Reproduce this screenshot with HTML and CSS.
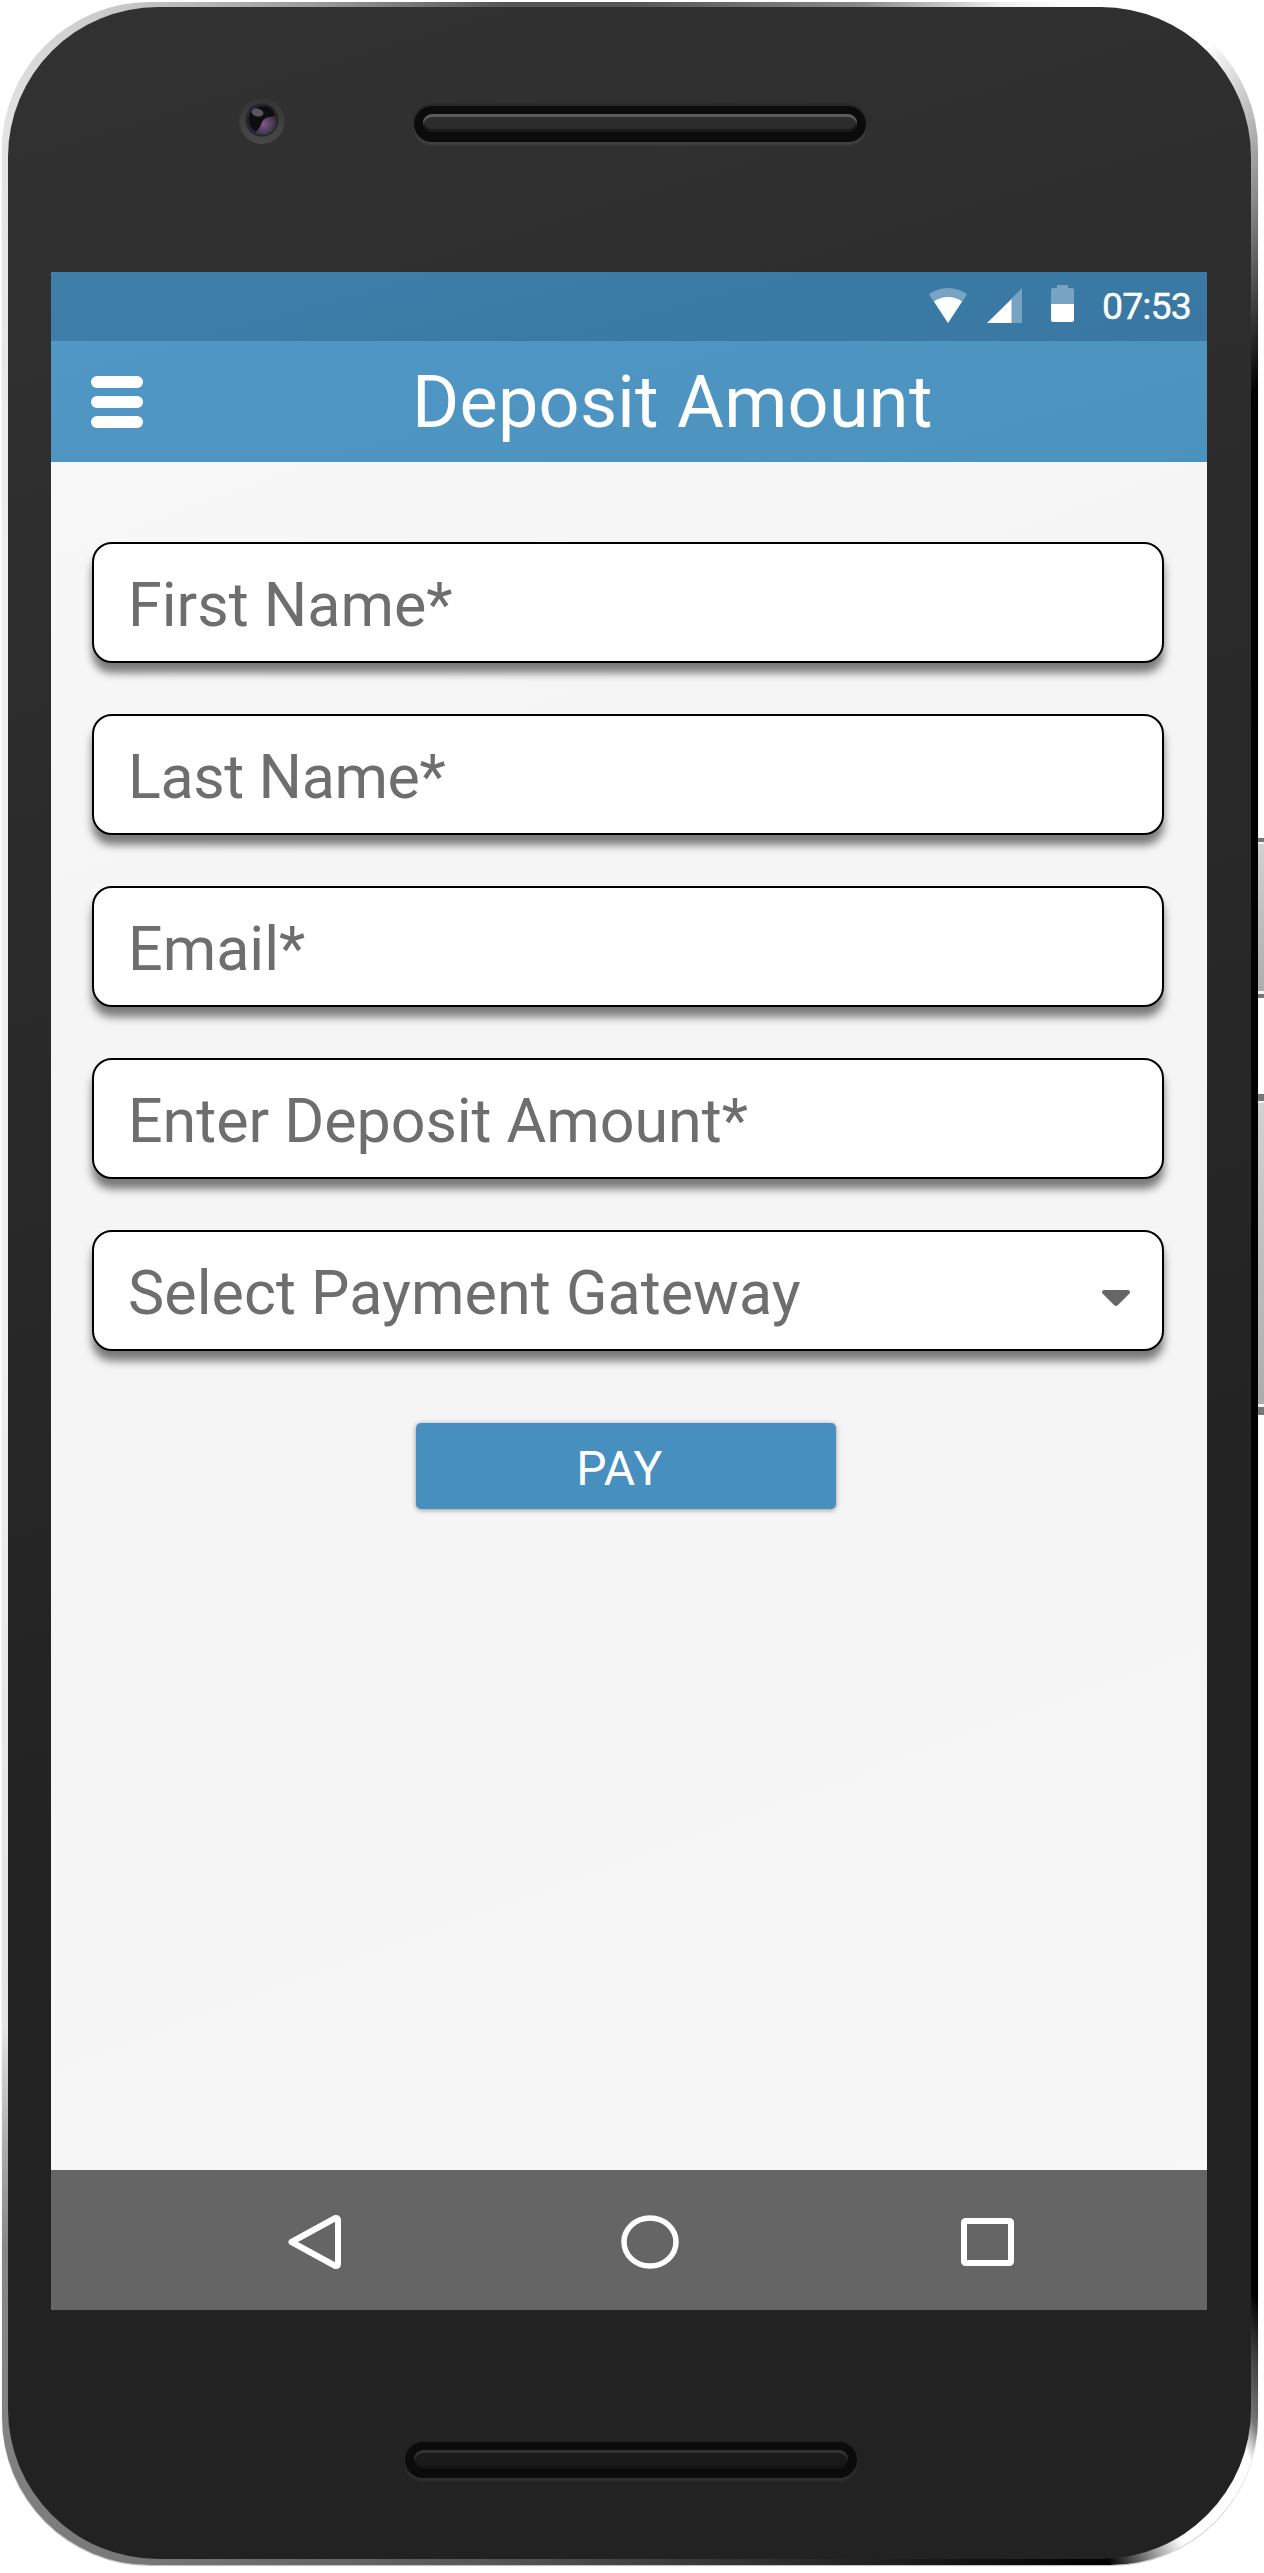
FILE: index.html
```html
<!DOCTYPE html>
<html lang="en">
<head>
<meta charset="utf-8">
<title>Deposit Amount</title>
<link rel="stylesheet" href="styles.css">
</head>
<body>
<div class="phone">
  <span class="side-button power"></span>
  <span class="side-button volume"></span>
  <div class="face">
    <div class="bezel-top">
      <svg class="camera" width="46" height="48" viewBox="0 0 46 48">
        <defs>
          <radialGradient id="lens" cx=".55" cy=".6" r=".55"><stop offset="0" stop-color="#7c5689"/><stop offset=".5" stop-color="#52405e"/><stop offset="1" stop-color="#25222b"/></radialGradient>
          <linearGradient id="halo" x1="0" y1="0" x2="0" y2="1"><stop offset="0" stop-color="#333"/><stop offset=".6" stop-color="#414141"/><stop offset="1" stop-color="#484848"/></linearGradient>
        </defs>
        <ellipse cx="23" cy="24" rx="22.500" ry="23" fill="url(#halo)"/>
        <circle cx="23" cy="23" r="16.500" fill="#25252c"/>
        <circle cx="23.500" cy="24" r="14" fill="url(#lens)"/>
        <path d="M13 32C8 25 9 14 17 11s17-3 19 8l-6 1c-5 1-8 5-9 10l-4 5z" fill="#0e0d10"/>
        <ellipse cx="18.500" cy="15.500" rx="6" ry="4" fill="#5b5460" transform="rotate(15 18.500 15.500)"/>
      </svg>
      <div class="grille"><span></span></div>
    </div>
    <main class="screen">
      <div class="status-bar">
        <svg class="wifi" width="38" height="35" viewBox="0 0 38 35">
          <path d="M0 6.500Q8 0 19 0t19 6.500L19 35z" fill="#78a3c2"/>
          <path d="M5 13.500Q11 9 19 9t14 4.500L19 35z" fill="#fff"/>
        </svg>
        <svg class="signal" width="35" height="35" viewBox="0 0 35 35">
          <path d="M35 0v35H24V11z" fill="#78a3c2"/><path d="M0 35 24.500 11v24z" fill="#fff"/>
        </svg>
        <svg class="battery" width="23" height="37" viewBox="0 0 23 37">
          <path d="M6 0h11v3h4q2 0 2 2v14H0V5q0-2 2-2h4z" fill="#78a3c2"/><path d="M0 19h23v16q0 2-2 2H2q-2 0-2-2z" fill="#fff"/>
        </svg>
        <span class="clock">07:53</span>
      </div>
      <header class="app-bar">
        <div class="menu"><span></span><span></span><span></span></div>
        <h1 class="title">Deposit Amount</h1>
      </header>
      <form class="form">
        <div class="field"><span class="label first">First Name*</span></div>
        <div class="field"><span class="label last">Last Name*</span></div>
        <div class="field"><span class="label email">Email*</span></div>
        <div class="field"><span class="label amount">Enter Deposit Amount*</span></div>
        <div class="field"><span class="label gateway">Select Payment Gateway</span>
          <svg width="28" height="16" viewBox="0 0 28 16"><path d="M2 0h24q3 1 1.500 3.500L16 15q-2 2-4 0L.5 3.500Q-1 1 2 0z" fill="#666"/></svg>
        </div>
        <button class="pay" type="button">PAY</button>
      </form>
      <nav class="nav-bar">
        <svg class="back" width="53" height="56" viewBox="0 0 53 56"><path d="M47.500 4 3.500 28l44 24q2.500 0 2.500-2.500v-43Q50 4 47.500 4z" fill="none" stroke="#fff" stroke-width="6" stroke-linejoin="round"/></svg>
        <svg class="home" width="58" height="54" viewBox="0 0 58 54"><ellipse cx="29" cy="27" rx="26" ry="24" fill="none" stroke="#fff" stroke-width="5.500"/></svg>
        <svg class="recent" width="53" height="48" viewBox="0 0 53 48"><rect x="3" y="3" width="47" height="42" rx="1.500" fill="none" stroke="#fff" stroke-width="6"/></svg>
      </nav>
    </main>
    <div class="bezel-bottom"><div class="grille dim"><span></span></div></div>
  </div>
</div>
</body>
</html>
```
FILE: styles.css
```css
* { box-sizing: border-box; }
html { background: #fff; }
body { margin: 0; width: 1264px; height: 2573px; overflow: hidden; font-family: Roboto, sans-serif; }

.phone {
  position: relative;
  width: 1256px;
  height: 2563px;
  margin: 2px 0 0 2px;
  padding: 5px 7px 6px 6px;
  border-radius: 148px;
  background: conic-gradient(#555 0deg, #888 10.2deg, #eee 16.2deg, #fff 19deg, #fff 25deg, #bbb 28deg, #888 30deg, #333 33deg, #000 35deg, #000 148.3deg, #333 149.5deg, #777 151.3deg, #fff 152.2deg, #fff 156.300deg, #777 158deg, #000 159.500deg, #222 169.700deg, #555 185.700deg, #777 201deg, #888 213deg, #aaa 215.700deg, #e4e4e4 220deg, #f0f0f0 270deg, #eee 320deg, #e2e2e2 331.700deg, #c4c4c4 339deg, #999 346.400deg, #555 354.300deg, #555 360deg);
  box-shadow: 0 1px 1px #bbb;
}
.side-button {
  position: absolute;
  left: 1256px;
  width: 6px;
  background: linear-gradient(#d2d2d2, #acacac);
  border-style: solid;
  border-color: #777;
  border-width: 4px 0;
  box-shadow: inset 0 2px #f4f4f4, inset 0 -3px #f4f4f4;
}
.power { top: 836px; height: 160px; }
.volume { top: 1092px; height: 321px; border-width: 7px 0 8px; }

.face {
  height: 2552px;
  border-radius: 150px;
  background: linear-gradient(163deg, #323232, #2d2d2d 22%, #242424 58%, #222 70%);
}
.bezel-top { height: 265px; display: flex; align-items: flex-start; padding: 90px 0 0 231px; }
.grille {
  width: 452px;
  height: 36px;
  margin: 9px 0 0 129px;
  padding: 8px 9px 10px;
  border-radius: 18px;
  background: #0b0b0b;
  box-shadow: 0 3px 3px #414141, 0 -2px 3px #272727;
}
.grille span { display: block; height: 18px; border-radius: 9px; background: #2c2c2c; box-shadow: inset 0 3px 1px #5c5c5c, inset 0 -3px #1b1b1b; }

.screen { width: 1156px; height: 2038px; margin-left: 43px; border-radius: 3px; overflow: hidden; background: linear-gradient(160deg, #f9f9f9, #f5f5f5 30%, #f5f5f5 65%, #f8f8f8); }
.status-bar { height: 69px; display: flex; align-items: flex-start; background: linear-gradient(165deg, #3d7eaa, #3878a3); }
.wifi { margin: 16px 0 0 878px; }
.signal { margin: 16px 0 0 20px; }
.battery { margin: 13px 0 0 29px; }
.clock { margin: 12px 0 0 28px; font-size: 37.500px; line-height: 44px; letter-spacing: -.9px; color: #fff; -webkit-text-stroke: .4px #fff; white-space: nowrap; }

.app-bar { height: 121px; display: flex; align-items: flex-start; background: linear-gradient(165deg, #5097c5, #4b92bf); }
.menu { display: grid; gap: 8px; margin: 35px 0 0 40px; }
.menu span { width: 52px; height: 12px; border-radius: 6px; background: #fff; }
.title { margin: 20px 0 0 269px; font-size: 72px; line-height: 84px; letter-spacing: .25px; font-weight: 400; color: #fff; white-space: nowrap; }

.form { height: 1708px; padding: 80px 43px 0 41px; display: flex; flex-direction: column; }
.field {
  height: 121px;
  margin-bottom: 51px;
  padding: 0 32px 0 34px;
  display: flex;
  align-items: center;
  justify-content: space-between;
  border: 2px solid #000;
  border-radius: 20px;
  background: #fff;
  box-shadow: 0 10px 8px rgba(0, 0, 0, .5);
}
.label { font-size: 61px; line-height: 72px; color: #6e6e6e; white-space: nowrap; padding-top: 4px; }
.last { letter-spacing: -.4px; }
.amount { letter-spacing: -.05px; }
.gateway { letter-spacing: .05px; }
.field svg { margin-top: 15px; }
.pay { width: 420px; height: 86px; margin: 21px 0 0 324px; padding: 5px 13px 0 0; border: 0; border-radius: 5px; background: #468fbf; color: #fff; font: 400 48px/56px Roboto, sans-serif; letter-spacing: .5px; text-align: center; box-shadow: 0 1px 5px rgba(0, 0, 0, .4); }

.nav-bar { height: 140px; display: flex; align-items: flex-start; background: #656565; }
.back { margin: 44px 0 0 237px; }
.home { margin: 45px 0 0 280px; }
.recent { margin: 48px 0 0 282px; }
.bezel-bottom { display: flex; padding: 123px 0 0 268px; }
.bezel-bottom .grille { margin-left: 129px; }
.dim { box-shadow: 0 3px 3px #313131; }
.dim span { background: #1a1a1a; box-shadow: inset 0 3px 1px #333, inset 0 -3px #151515; }
```
